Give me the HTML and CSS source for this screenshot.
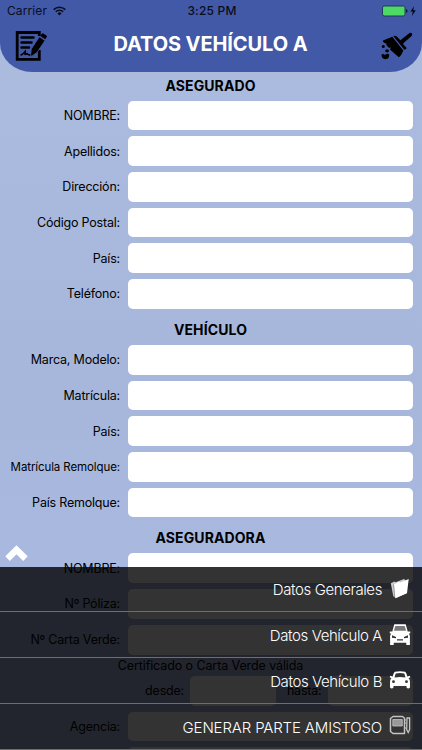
FILE: index.html
```html
<!DOCTYPE html>
<html lang="es">
<head>
  <meta charset="UTF-8">
  <meta name="viewport" content="width=device-width, initial-scale=1.0">
  <title>Datos Vehículo A</title>
  <link rel="stylesheet" href="styles.css">
</head>
<body>
  <header class="header">
    <div class="status">
      <div class="carrier">
        <span>Carrier</span>
        <svg width="13" height="10" viewBox="0 0 13 10" fill="none" stroke="#0a0d1c" stroke-width="1.6">
          <path d="M.7 3.6a8.2 8.2 0 0 1 11.6 0M2.8 5.8a5.2 5.2 0 0 1 7.4 0"/>
          <path d="M6.5 9.5 4.4 7.4a3 3 0 0 1 4.2 0z" fill="#0a0d1c" stroke="none"/>
        </svg>
      </div>
      <span class="clock">3:25 PM</span>
      <div class="battery">
        <svg width="35" height="12" viewBox="0 0 35 12">
          <rect x=".5" y="1" width="22.5" height="10" rx="1.8" fill="#4cd964" stroke="#22395c"/>
          <path d="M24 4.2q1.6.3 1.6 1.8T24 7.8z" fill="#101a3a"/>
          <path d="M32 1.2 28.4 6.6h2.4l-.9 4.3 3.9-5.6h-2.5z" fill="#05081a"/>
        </svg>
      </div>
    </div>
    <div class="title-bar">
      <svg width="32" height="32" viewBox="0 0 32 32">
        <path d="M24.300 6V2.500H2.200v26.800h22.100V20" fill="none" stroke="#000" stroke-width="2.800"/>
        <path d="M6.500 7.500H18.500M6.500 12.500H16.500M6.500 17.500H14" stroke="#000" stroke-width="2.500" stroke-linecap="round"/>
        <path d="M5.500 25.300c2.500-.8 4-3 4.800-4 .3 1.200-1 3.200 0 3.200s1.500-1.200 2-.8.500 1.300 2 1.200h4" fill="none" stroke="#000" stroke-width="1.600"/>
        <path d="M16.300 19 24.400 6.800l5.600 3.800-8.200 12.200-6.300 3.900z" stroke="#4259a8" stroke-width=".8"/>
        <path d="M25.300 5.900l1.500-2.200q.6-.8 1.500-.2l3.100 2.100q.8.600.3 1.500l-1.500 2.200z"/>
      </svg>
      <h1>DATOS VEHÍCULO A</h1>
      <svg width="32" height="28" viewBox="0 0 32 28">
        <path d="M11.300 4.700 2 8.500Q1.700 9.300 2.200 10L4.500 11.600 5.500 11.200 5.300 13 8 16 9.800 15.200 9 17.500 17.800 25.200Q20.500 23.500 22.300 18.500Z"/>
        <path d="M12.300 4.100Q14.200 3.200 15.800 4.600L19.400 8.200 28.500 1Q30 .3 31 1.500 31.600 2.800 30.600 3.900L22.600 10.900Q21.700 12.300 23 13.300L25.300 15.600Q26.200 17.200 23.300 17.700Z"/>
        <circle cx="2.300" cy="14.600" r="1.500"/>
        <ellipse cx="6.100" cy="18.800" rx="1.900" ry="1.600"/>
        <path d="M.5 22.500Q2.200 21.500 4 22.900 6 21.200 8.200 22.200 8.600 27 4.400 27.200.5 27 .5 22.500Z"/>
      </svg>
    </div>
  </header>

  <main class="form">
    <section>
      <h2>ASEGURADO</h2>
      <div class="row"><label>NOMBRE:</label><input type="text"></div>
      <div class="row"><label>Apellidos:</label><input type="text"></div>
      <div class="row"><label>Dirección:</label><input type="text"></div>
      <div class="row"><label>Código Postal:</label><input type="text"></div>
      <div class="row"><label>País:</label><input type="text"></div>
      <div class="row"><label>Teléfono:</label><input type="text"></div>
    </section>
    <section>
      <h2>VEHÍCULO</h2>
      <div class="row"><label>Marca, Modelo:</label><input type="text"></div>
      <div class="row"><label>Matrícula:</label><input type="text"></div>
      <div class="row"><label>País:</label><input type="text"></div>
      <div class="row"><label class="small">Matrícula Remolque:</label><input type="text"></div>
      <div class="row"><label>País Remolque:</label><input type="text"></div>
    </section>
    <section>
      <h2>ASEGURADORA</h2>
      <div class="row"><label>NOMBRE:</label><input type="text"></div>
      <div class="row"><label>Nº Póliza:</label><input type="text"></div>
      <div class="row"><label>Nº Carta Verde:</label><input type="text"></div>
      <p class="note">Certificado o Carta Verde válida</p>
      <div class="row dates">
        <label class="from">desde:</label><input type="text">
        <label class="to">hasta:</label><input type="text">
      </div>
      <div class="row"><label>Agencia:</label><input type="text"></div>
      <div class="row"><label></label><input type="text"></div>
    </section>
  </main>

  <!-- Bottom menu -->
  <nav class="menu">
    <svg class="arrow" width="23" height="17" viewBox="0 0 23 17">
      <path d="M11.500.3 22.700 11.300 18.200 16 11.500 9.200 4.800 16 .3 11.300z" fill="#fff"/>
    </svg>
    <a class="item">
      <span>Datos Generales</span>
      <svg width="22" height="22" viewBox="0 0 22 22">
        <path d="M1.800 5.200 5.500 3.500l1.200.8L15 1l1.500 1.200.5 13-10 4.900-2.700-1.900z" fill="#ccc"/>
        <path d="M5 6.300 10 3.800l1.400.6L19.700 1 18 15.200 6.300 20.200z" fill="#fff"/>
        <path d="M4.600 6.500 5.800 19.500" stroke="#666" stroke-width=".5"/>
      </svg>
    </a>
    <a class="item">
      <span>Datos Vehículo A</span>
      <svg width="22" height="22" viewBox="0 0 22 22">
        <path d="M5.300.2H16.700l2 7.400h2.500v2h-1.400l1.100 2.200V21H17.300V18.800H4.700V21H1.100V11.800L2.200 9.600H.8V7.600h2.500z" fill="#fff"/>
        <path d="M6.300 1.900h9.400l1.400 4.900H4.900z" fill="#777"/>
        <path d="M3 11.300 7 13v1.200l-4-.5zM19 11.300 15 13v1.200l4-.5zM8 15.200h6v1.200H8z" fill="#333"/>
      </svg>
    </a>
    <a class="item">
      <span>Datos Vehículo B</span>
      <svg width="22" height="22" viewBox="0 0 22 22">
        <path d="M6 2.800Q11 1.600 16 2.800 17.300 3.300 18.300 7.500L20.800 6.800 21.300 8.300 19.600 9.300Q21 10.500 21 13V18.500Q19.200 20.300 17.500 18.500V17H4.500V18.500Q2.800 20.300 1 18.500V13Q1 10.500 2.400 9.300L.7 8.300 1.200 6.800 3.700 7.500Q4.700 3.300 6 2.800Z" fill="#fff"/>
        <path d="M6.700 4.500Q11 3.600 15.300 4.500L16.500 8.400Q11 7.500 5.500 8.400Z" fill="#333"/>
        <circle cx="4.500" cy="12.700" r="1.400" fill="#333"/>
        <circle cx="17.500" cy="12.700" r="1.400" fill="#333"/>
      </svg>
    </a>
    <a class="item wide">
      <span>GENERAR PARTE AMISTOSO</span>
      <svg width="22" height="22" viewBox="0 0 22 22" fill="none" stroke="#c4c4c4">
        <path d="M4 1.500H13.500l2 1.800V18.500H4L1.500 16.500V3.500z" stroke-width="1.500" stroke-linejoin="round"/>
        <path d="M3.800 4.500h9.500v6.500H3.800z" fill="#999" stroke-width=".8"/>
        <path d="M15 5h2M15 8h2M15 13h2" stroke-width="1"/>
        <path d="M18 3h2.600v11.500L19.200 17.500 17.700 14.500z" stroke-width="1.300"/>
      </svg>
    </a>
  </nav>
</body>
</html>
```

FILE: styles.css
```css
* { margin: 0; padding: 0; box-sizing: border-box; }

html, body {
  height: 100%;
}

body {
  font-family: Inter, 'Noto Sans', sans-serif;
  background: linear-gradient(180deg, #abbcdf, #a7b7dc 50%, #a9b9e0);
  color: #000;
  overflow: hidden;
}

/* Header */
.header {
  height: 71.500px;
  background: #4259a8;
  border-radius: 0 0 32px 32px / 0 0 29px 29px;
}

.status {
  display: grid;
  grid-template-columns: 1fr auto 1fr;
  align-items: center;
  height: 21px;
  padding: 0 5px 0 7px;
  color: #0a0d1c;
  font-size: 12px;
}

.carrier {
  display: flex;
  align-items: center;
  gap: 6px;
  letter-spacing: 0.100px;
}

.clock {
  font-weight: 500;
  letter-spacing: 0.2px;
}

.battery {
  display: flex;
  justify-content: flex-end;
}

.title-bar {
  display: flex;
  align-items: center;
  justify-content: space-between;
  height: 46px;
  padding: 0 9px 0 15px;
}

.title-bar svg {
  margin-top: 4px;
}

h1 {
  margin-right: 7px;
  font-size: 20px;
  font-weight: 700;
  letter-spacing: -0.1px;
  color: #fff;
}

/* Form */
.form {
  padding: 0 9px 0 8px;
}

h2 {
  height: 30.200px;
  line-height: 29px;
  font-size: 14px;
  font-weight: 700;
  letter-spacing: 0.100px;
  text-align: center;
}

section:first-child h2 {
  height: 29px;
  line-height: 27px;
}

.row {
  display: flex;
  align-items: center;
  height: 29.700px;
  margin-bottom: 6px;
}

label {
  width: 112px;
  margin-right: 8px;
  text-align: right;
  font-size: 12.500px;
  letter-spacing: -0.200px;
  white-space: nowrap;
}

label.small {
  font-size: 11.500px;
  letter-spacing: -0.100px;
}

input {
  flex: 1;
  min-width: 0;
  height: 100%;
  border: none;
  border-radius: 5px;
  background: #fff;
}

.note {
  height: 15.500px;
  line-height: 10px;
  font-size: 12.500px;
  letter-spacing: -0.100px;
  text-align: center;
}

.dates label.from {
  width: 176px;
  margin-right: 6px;
}

.dates label.to {
  width: 46px;
  margin-right: 6px;
}

/* Menu */
.menu {
  position: absolute;
  left: 0;
  right: 0;
  bottom: 0;
  height: 183.500px;
  background: rgba(0, 0, 0, 0.8);
}

.arrow {
  position: absolute;
  left: 5px;
  top: -22px;
}

.item {
  display: flex;
  align-items: center;
  justify-content: flex-end;
  gap: 7px;
  height: 45.800px;
  padding: 2px 11px 0 0;
  border-bottom: 1px solid #6d6e71;
  color: #fff;
  font-size: 15px;
  font-weight: 300;
  letter-spacing: -0.400px;
}

.item svg {
  margin-top: -2px;
}

.item.wide {
  letter-spacing: -0.150px;
}
```
